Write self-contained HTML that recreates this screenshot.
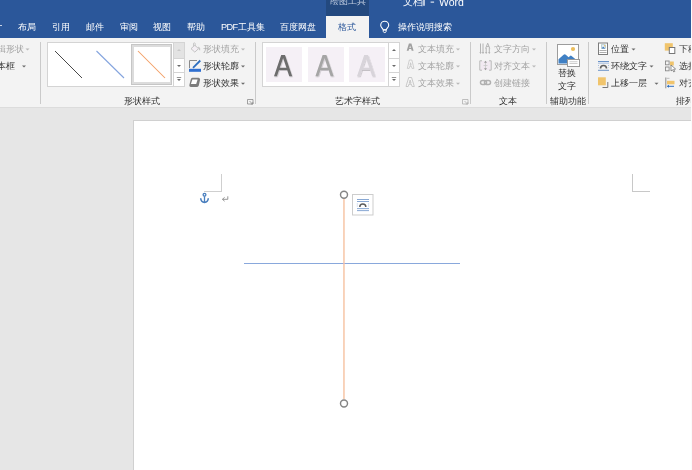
<!DOCTYPE html>
<html><head><meta charset="utf-8">
<style>
*{margin:0;padding:0;box-sizing:border-box}
html,body{width:692px;height:470px;overflow:hidden;background:#e6e6e6;font-family:"Liberation Sans",sans-serif;}
.a{position:absolute;white-space:nowrap}
.t,.lbl,.tab,.a{will-change:transform}
#top{position:absolute;left:0;top:0;width:692px;height:38px;background:#2b579a}
.tab{position:absolute;top:20px;font-size:9.2px;line-height:14px;color:#fff;font-weight:500}
#ribbon{position:absolute;left:0;top:38px;width:692px;height:70px;background:#f3f3f3;border-bottom:1px solid #dcdcdc}
.t{position:absolute;font-size:9.2px;line-height:12px;color:#333;font-weight:500;white-space:nowrap}
.dis{color:#a4a4a4}
.sep{position:absolute;top:42px;width:1px;height:62px;background:#d4d4d4}
.lbl{position:absolute;top:95px;font-size:9.2px;line-height:12px;color:#333;font-weight:500;white-space:nowrap}
.arr{position:absolute;width:0;height:0;border-left:2px solid transparent;border-right:2px solid transparent;border-top:2px solid #777}
#page{position:absolute;left:133px;top:120px;width:600px;height:400px;background:#fff;border:1px solid #d0d0d0}
</style></head><body>
<div id="top"></div>
<div class="a" style="left:326px;top:0;width:43px;height:16px;background:#23497f"></div>
<div class="a" style="left:329.5px;top:-6px;font-size:9.4px;line-height:14px;color:#c3cfe2">绘图工具</div>
<div class="a" style="left:402.5px;top:-5.5px;font-size:9.5px;line-height:14px;color:#fff">文档</div><svg class="a" style="left:0;top:0" width="692" height="10"><path d="M424 0 V5.8" stroke="#fff" stroke-width="1.3"/><rect x="430.6" y="1.6" width="3.5" height="1" fill="#fff"/></svg><div class="a" style="left:439px;top:-5px;font-size:10.5px;line-height:14px;color:#fff">Word</div>
<div class="a" style="left:326px;top:16px;width:42.5px;height:22px;background:#f3f3f3"></div>
<div class="a" style="left:0;top:24.8px;width:2.4px;height:1.2px;background:#c9d4e6"></div>
<div class="tab" style="left:18px">布局</div>
<div class="tab" style="left:52px">引用</div>
<div class="tab" style="left:86px">邮件</div>
<div class="tab" style="left:120px">审阅</div>
<div class="tab" style="left:153px">视图</div>
<div class="tab" style="left:187px">帮助</div>
<div class="tab" style="left:221px"><span style="letter-spacing:-0.6px">PDF</span>工具集</div>
<div class="tab" style="left:280px">百度网盘</div>
<div class="tab" style="left:338px;color:#2b579a">格式</div>
<div class="tab" style="left:398px">操作说明搜索</div>

<svg class="a" style="left:0;top:0" width="692" height="40" viewBox="0 0 692 40">
<path d="M383.1 29.8 C382.7 28.4 380.7 27.3 380.7 25.2 A4 4 0 0 1 388.7 25.2 C388.7 27.3 386.7 28.4 386.3 29.8 Z" fill="none" stroke="#fff" stroke-width="1.1"/>
<path d="M383.3 30 H386.1 V31.6 Q385.8 32.6 384.7 32.6 Q383.6 32.6 383.3 31.6Z" fill="none" stroke="#fff" stroke-width="1"/>
</svg>
<div id="ribbon"></div>
<svg class="a" style="left:0;top:0" width="692" height="120" viewBox="0 0 692 120">
<g fill="none" shape-rendering="crispEdges">
<!-- separators -->
<rect x="40" y="42" width="1" height="62" fill="#cacaca"/>
<rect x="255" y="42" width="1" height="62" fill="#cacaca"/>
<rect x="470" y="42" width="1" height="62" fill="#cacaca"/>
<rect x="546" y="42" width="1" height="62" fill="#cacaca"/>
<rect x="588" y="42" width="1" height="62" fill="#cacaca"/>
<!-- shape gallery -->
<rect x="47.5" y="42.5" width="137" height="44" fill="#fff" stroke="#d4d4d4"/>
<rect x="131.5" y="44.5" width="40" height="40" fill="#dcdcdc" stroke="#c6c6c6"/>
<rect x="134" y="47" width="36" height="35" fill="#fff"/>
<rect x="173.5" y="42.5" width="11" height="16" fill="#e3e3e3" stroke="#d4d4d4"/>
<rect x="173.5" y="58.5" width="11" height="14" fill="#fff" stroke="#d4d4d4"/>
<rect x="173.5" y="72.5" width="11" height="14" fill="#fff" stroke="#d4d4d4"/>
<!-- wordart gallery -->
<rect x="262.5" y="42.5" width="137" height="44" fill="#fff" stroke="#d4d4d4"/>
<rect x="266" y="47" width="36" height="35" fill="#f5f0f6"/>
<rect x="307.5" y="47" width="36" height="35" fill="#f5f0f6"/>
<rect x="349" y="47" width="36" height="35" fill="#f5f0f6"/>
<rect x="388.5" y="42.5" width="11" height="16" fill="#fff" stroke="#d4d4d4"/>
<rect x="388.5" y="58.5" width="11" height="14" fill="#fff" stroke="#d4d4d4"/>
<rect x="388.5" y="72.5" width="11" height="14" fill="#fff" stroke="#d4d4d4"/>
</g>
<g shape-rendering="geometricPrecision">
<line x1="55" y1="51" x2="82" y2="78" stroke="#484848" stroke-width="1.0"/>
<line x1="96.5" y1="51" x2="124" y2="78" stroke="#84a4de" stroke-width="1.1"/>
<line x1="138" y1="51" x2="165" y2="78" stroke="#f39c62" stroke-width="1.05"/>
<!-- scroll arrows -->
<path d="M177 51 L179 49 L181 51Z" fill="#c8c8c8"/>
<path d="M177 65 L179 67 L181 65Z" fill="#6a6a6a"/>
<rect x="176.8" y="77" width="4.4" height="0.9" fill="#8a8a8a"/>
<path d="M177 79 L179 81 L181 79Z" fill="#6a6a6a"/>
<path d="M392 51 L394 49 L396 51Z" fill="#6a6a6a"/>
<path d="M392 65 L394 67 L396 65Z" fill="#6a6a6a"/>
<rect x="391.8" y="77" width="4.4" height="0.9" fill="#8a8a8a"/>
<path d="M392 79 L394 81 L396 79Z" fill="#6a6a6a"/>
<!-- dropdown arrows -->
<g fill="#6a6a6a">
<path d="M25.5 48.5h4l-2 2z" fill="#b8b8b8"/>
<path d="M22 65.5h4l-2 2z"/>
<path d="M241 48.5h4l-2 2z" fill="#b8b8b8"/>
<path d="M241 65.5h4l-2 2z"/>
<path d="M241 82.8h4l-2 2z"/>
<path d="M456 48.5h4l-2 2z" fill="#b8b8b8"/>
<path d="M456 65.5h4l-2 2z" fill="#b8b8b8"/>
<path d="M456 82.8h4l-2 2z" fill="#b8b8b8"/>
<path d="M532 48.5h4l-2 2z" fill="#b8b8b8"/>
<path d="M532 65.5h4l-2 2z" fill="#b8b8b8"/>
<path d="M631.5 48.5h4l-2 2z"/>
<path d="M649.5 65.5h4l-2 2z"/>
<path d="M654.5 82.8h4l-2 2z"/>
</g>
<!-- shape fill bucket (disabled) -->
<path d="M191 48.7 L194.8 45.2 L198.5 48.7 L194.8 52.1 Z" fill="#f4eff4" stroke="#bdbdbd" stroke-width="0.9"/>
<path d="M193.5 46.3 V43.3 Q194.3 42.4 195.2 43.3 V46.3" fill="none" stroke="#c4c4c4" stroke-width="0.9"/>
<path d="M198.3 47 Q200.3 48.3 199.6 50.3" fill="none" stroke="#c4c4c4" stroke-width="1.2"/>
<!-- shape outline pen -->
<path d="M189.5 68 V60.5 H197" fill="none" stroke="#8a8a8a" stroke-width="1"/>
<path d="M200.3 60.5 L193 67.8" stroke="#2e6fc1" stroke-width="1.8"/>
<rect x="189" y="68.8" width="12" height="3" fill="#2f6fd0"/>
<!-- shape effects -->
<path d="M192.3 77.8 H198.6 Q199.9 77.9 200.1 79.6 L198.8 85.6 Q198.3 87.1 196.6 87.1 H190.8 Q189.2 87 189.3 85.3 L190.8 79.2 Q191.1 77.9 192.3 77.8Z" fill="#7c7c7c"/>
<path d="M192.4 79.4 H197.6 L196.2 84.1 H190.9Z" fill="#fff"/>
<!-- wordart A letters -->
<defs><filter id="sh" x="-20%" y="-20%" width="140%" height="140%"><feDropShadow dx="0.6" dy="0.9" stdDeviation="0.6" flood-color="#000" flood-opacity="0.22"/></filter></defs>
<g filter="url(#sh)" fill-rule="evenodd">
<path d="M281.22 55.10 H284.99 L292.20 76.20 H289.30 L287.17 69.98 H279.03 L276.90 76.20 H274.00 Z M283.10 58.07 L286.45 67.87 H279.75 Z" fill="#6d6d6d"/>
<path transform="translate(41.4 0)" d="M281.22 55.10 H284.99 L292.20 76.20 H289.30 L287.17 69.98 H279.03 L276.90 76.20 H274.00 Z M283.10 58.07 L286.45 67.87 H279.75 Z" fill="#a5a5a5"/>
<path transform="translate(83 0)" d="M281.22 55.10 H284.99 L292.20 76.20 H289.30 L287.17 69.98 H279.03 L276.90 76.20 H274.00 Z M283.10 58.07 L286.45 67.87 H279.75 Z" fill="#d8d4da"/>
</g>
<!-- text fill/outline/effects icons -->
<path fill-rule="evenodd" d="M408.91 43.40 H411.38 L413.60 50.70 H411.70 L411.15 48.88 H409.15 L408.60 50.70 H406.70 Z M410.15 45.59 L410.86 47.93 H409.44 Z" fill="#a0a0a0"/>
<path fill-rule="evenodd" d="M409.37 60.00 H411.84 L413.90 68.40 H412.00 L411.48 66.30 H409.72 L409.20 68.40 H407.30 Z M410.60 62.71 L411.22 65.21 H409.98 Z" fill="#f6f6f6" stroke="#bdbdbd" stroke-width="0.7"/>
<path fill-rule="evenodd" d="M408.72 77.50 H411.58 L414.30 86.50 H412.10 L411.42 84.25 H408.88 L408.20 86.50 H406.00 Z M410.15 80.05 L411.07 83.08 H409.23 Z" fill="#f6f6f6" stroke="#bdbdbd" stroke-width="0.8"/>
<!-- text direction -->
<g stroke="#b4b4b4" stroke-width="1" fill="none">
<path d="M480.5 43.5 V53.5 M483 43.5 V53.5 M486.2 48 V53.5 M489.3 48 V53.5"/>
<path d="M485.6 48.5 L487.7 43.2 L489.8 48.5 M486.4 46.6 H489"/>
</g>
<g fill="#b4b4b4"><path d="M479.3 52h2.4l-1.2 1.8z M481.8 52h2.4l-1.2 1.8z M485 52h2.4l-1.2 1.8z M488.1 52h2.4l-1.2 1.8z"/></g>
<!-- align text -->
<rect x="480.5" y="61" width="10" height="9" fill="#f1e9f1"/>
<path d="M482 60.8 H479.8 V70.2 H482 M489 60.8 H491.2 V70.2 H489" fill="none" stroke="#b8b8b8" stroke-width="1"/>
<path d="M485.5 61.5 V69.5 M483.5 65.5 H487.5" stroke="#c9c9c9" stroke-width="0.8"/>
<path d="M484 62.8 L485.5 60.8 L487 62.8Z M484 68.2 L485.5 70.2 L487 68.2Z" fill="#9a9a9a"/>
<!-- link -->
<g fill="none" stroke="#b0b0b0" stroke-width="1.5">
<rect x="480.5" y="80.5" width="6" height="4" rx="2"/>
<rect x="484.5" y="80.5" width="6" height="4" rx="2"/>
</g>
<!-- alt text -->
<rect x="557.5" y="44.5" width="21" height="20" fill="#fff" stroke="#9c9c9c"/>
<circle cx="573" cy="49" r="2.1" fill="#ebbd5c"/>
<path d="M558.5 63.5 V59.2 L563.6 54.8 Q564.7 53.8 565.8 54.8 L568.6 57.3 L570 55.9 Q570.8 55.2 571.6 55.9 L576.5 60 V63.5Z" fill="#4080c4"/>
<rect x="567.5" y="59.5" width="12" height="7" fill="#fff" stroke="#999"/>
<rect x="569.5" y="61.3" width="8" height="0.9" fill="#c8c8c8"/>
<rect x="569.5" y="63.1" width="8" height="0.9" fill="#c8c8c8"/>
<!-- position -->
<rect x="598.5" y="43" width="9" height="11.5" fill="#fff" stroke="#7c7c7c"/>
<rect x="601.5" y="44.8" width="4" height="3.8" fill="#e7f0f8" stroke="#8aa" stroke-width="0.5"/>
<path d="M601.8 48.4 L603 46.6 L605.3 48.4Z" fill="#3f79bd"/>
<rect x="604" y="45.2" width="1.2" height="1.2" fill="#ebbd5c"/>
<rect x="599.5" y="50" width="7" height="0.8" fill="#9a9a9a"/>
<rect x="599.5" y="52" width="7" height="0.8" fill="#9a9a9a"/>
<!-- wrap text -->
<rect x="598" y="61" width="11" height="1" fill="#6b93c8"/>
<rect x="598" y="62.7" width="11" height="0.9" fill="#9cb6dc"/>
<path d="M598.5 65 V67.5 M608.5 65 V67.5" stroke="#9cb6dc" stroke-width="0.9" stroke-dasharray="1 1"/>
<path d="M600.5 68.5 A3 3 0 0 1 606.5 68.5" fill="none" stroke="#606060" stroke-width="1.6"/>
<rect x="598" y="69.8" width="11" height="1" fill="#6b93c8"/>
<!-- bring forward -->
<rect x="598" y="77.3" width="7.8" height="8" fill="#f0c46c"/>
<path d="M602.5 87.5 H607.8 V82" fill="none" stroke="#777" stroke-width="1"/>
<!-- send backward -->
<rect x="664.8" y="43.2" width="8" height="7.4" fill="#f0c46c"/>
<rect x="669.3" y="47.5" width="5.5" height="6" fill="#fff" stroke="#777" stroke-width="1"/>
<!-- selection pane -->
<rect x="665.5" y="61" width="3.6" height="3.8" fill="none" stroke="#8a8a8a" stroke-width="0.9"/>
<rect x="665.5" y="67" width="3.6" height="3.8" fill="none" stroke="#8a8a8a" stroke-width="0.9"/>
<rect x="670" y="61.5" width="3.8" height="4" fill="#f0c46c"/>
<path d="M671 65 L671 71 L672.5 69.8 L673.8 72 L674.8 71.4 L673.6 69.3 L675.6 69 Z" fill="#fff" stroke="#666" stroke-width="0.7"/>
<!-- align -->
<path d="M665.8 77.5 V88.3" stroke="#8a8a8a" stroke-width="1"/>
<rect x="666.5" y="77.8" width="3" height="1" fill="#bcbcbc"/>
<rect x="667" y="80.8" width="7.5" height="3.5" fill="#f0c46c"/>
<path d="M667.5 86.3 H674" stroke="#2e6fc1" stroke-width="1"/>
<path d="M666.8 86.3 L669 84.8 V87.8Z" fill="#2e6fc1"/>
<!-- dialog launchers -->
<path d="M247.5 99.5 h5.5 v4.5 h-5.5z" fill="none" stroke="#8a8a8a" stroke-width="0.8"/>
<path d="M249.5 101 l3 3 M250.8 104 h2 v-2" fill="none" stroke="#8a8a8a" stroke-width="0.8"/>
<path d="M462.5 99.5 h5.5 v4.5 h-5.5z" fill="none" stroke="#b0b0b0" stroke-width="0.8"/>
<path d="M464.5 101 l3 3 M465.8 104 h2 v-2" fill="none" stroke="#b0b0b0" stroke-width="0.8"/>
</g>
</svg>
<div class="t dis" style="left:-3px;top:43px">辑形状</div>
<div class="t" style="left:-3px;top:60px">本框</div>
<div class="t dis" style="left:203px;top:43px">形状填充</div>
<div class="t" style="left:203px;top:60px">形状轮廓</div>
<div class="t" style="left:203px;top:77px">形状效果</div>
<div class="t dis" style="left:418px;top:43px">文本填充</div>
<div class="t dis" style="left:418px;top:60px">文本轮廓</div>
<div class="t dis" style="left:418px;top:77px">文本效果</div>
<div class="t dis" style="left:494px;top:43px">文字方向</div>
<div class="t dis" style="left:494px;top:60px">对齐文本</div>
<div class="t dis" style="left:494px;top:77px">创建链接</div>
<div class="t" style="left:558px;top:67px">替换</div>
<div class="t" style="left:558px;top:79.5px">文字</div>
<div class="t" style="left:611px;top:43px">位置</div>
<div class="t" style="left:611px;top:60px">环绕文字</div>
<div class="t" style="left:611px;top:77px">上移一层</div>
<div class="t" style="left:679px;top:43px">下移一层</div>
<div class="t" style="left:679px;top:60px">选择窗格</div>
<div class="t" style="left:679px;top:77px">对齐</div>
<div class="lbl" style="left:124px">形状样式</div>
<div class="lbl" style="left:335px">艺术字样式</div>
<div class="lbl" style="left:499px">文本</div>
<div class="lbl" style="left:550px">辅助功能</div>
<div class="lbl" style="left:676px">排列</div>

<div id="page"></div>
<svg class="a" style="left:0;top:0" width="692" height="470" viewBox="0 0 692 470">
<g shape-rendering="crispEdges">
<rect x="221" y="174" width="1" height="17.5" fill="#cfcfcf"/>
<rect x="204" y="191" width="18" height="1" fill="#cfcfcf"/>
<rect x="632" y="174" width="1" height="17.5" fill="#c8c8c8"/>
<rect x="632" y="191" width="18" height="1" fill="#c8c8c8"/>
</g>
<!-- anchor -->
<g fill="none" stroke="#4a7fbe" stroke-width="1.3">
<circle cx="204.5" cy="194.7" r="1.4"/>
<path d="M204.5 196.2 V202.2"/>
<path d="M200.7 198.3 Q201 202.3 204.5 202.4 Q208 202.3 208.3 198.3" stroke-width="1.6"/>
</g>
<!-- return mark -->
<path d="M227.8 196.3 V199.3 H222.6 M224.6 197.4 L222.4 199.3 L224.6 201.2" fill="none" stroke="#8a8a8a" stroke-width="0.9"/>
<!-- blue line -->
<rect x="244" y="263" width="216" height="1" fill="#89a8dc"/>
<!-- orange line -->
<rect x="343" y="199" width="1" height="200" fill="#f8d1b8"/><rect x="344" y="199" width="1" height="200" fill="#f9d6c0"/><rect x="343" y="263" width="2" height="1" fill="#d1b8c0"/>
<!-- handles -->
<circle cx="344" cy="194.7" r="3.5" fill="#fff" stroke="#858585" stroke-width="1.45"/>
<circle cx="344" cy="403.4" r="3.5" fill="#fff" stroke="#858585" stroke-width="1.45"/>
<!-- layout options -->
<rect x="352.5" y="194.5" width="20.5" height="20.5" fill="#fff" stroke="#cdcdcd"/>
<rect x="357" y="199" width="12" height="0.9" fill="#7c9fcf"/>
<rect x="357" y="201.1" width="12" height="0.9" fill="#7c9fcf"/>
<rect x="357" y="208.2" width="12" height="0.9" fill="#7c9fcf"/>
<rect x="357" y="210.2" width="12" height="0.9" fill="#7c9fcf"/>
<path d="M357.3 203.5 V206.5 M368.6 203.5 V206.5" stroke="#9fb6d8" stroke-width="0.8" stroke-dasharray="1 1"/>
<path d="M359.8 207 A3 3 0 0 1 365.8 207" fill="none" stroke="#5b5b5b" stroke-width="1.5"/>
</svg>
<div class="a" style="left:691px;top:0;width:1px;height:470px;background:#fbfbfb"></div>
</body></html>
